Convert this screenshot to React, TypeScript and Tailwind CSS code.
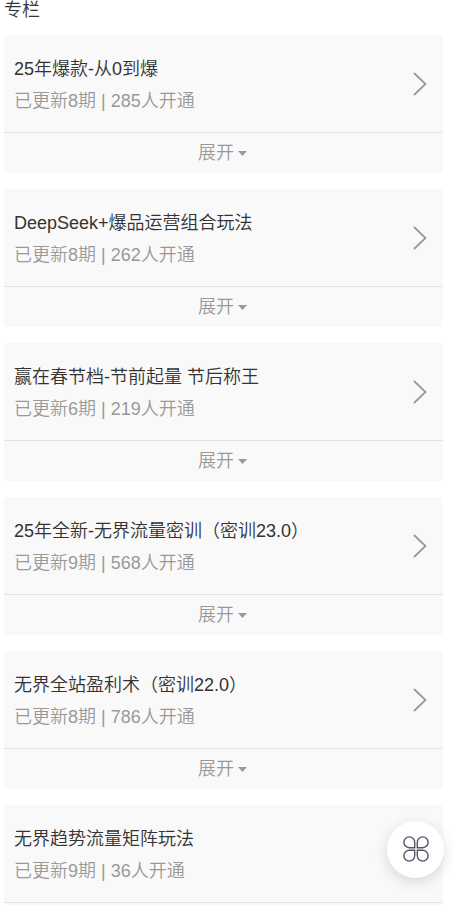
import { useState } from 'react';

type Column = {
    title: string;
    issues: number;
    members: number;
};

const columns: Column[] = [
    { title: '25年爆款-从0到爆', issues: 8, members: 285 },
    { title: 'DeepSeek+爆品运营组合玩法', issues: 8, members: 262 },
    { title: '赢在春节档-节前起量 节后称王', issues: 6, members: 219 },
    { title: '25年全新-无界流量密训（密训23.0）', issues: 9, members: 568 },
    { title: '无界全站盈利术（密训22.0）', issues: 8, members: 786 },
    { title: '无界趋势流量矩阵玩法', issues: 9, members: 36 },
];

function ColumnCard({ title, issues, members }: Column) {
    const [open, setOpen] = useState(false);

    return (
        <li className="rounded-sm bg-[#f9f9f9]">
            <a href="#" className="flex items-center justify-between pr-4 pl-2.5">
                <div className="min-w-0 pt-[18px] pb-[15px] leading-8">
                    <h2 className="text-[#333]">{title}</h2>
                    <p className="text-[#999]">
                        已更新{issues}期 | {members}人开通
                    </p>
                </div>
                <svg className="h-6 w-3.5 shrink-0" viewBox="0 0 14 24" fill="none" stroke="#999" strokeWidth="1.8" aria-hidden="true">
                    <path d="M1 1l11.5 11L1 23" />
                </svg>
            </a>
            {/* 展开按钮 */}
            <button
                type="button"
                aria-expanded={open}
                onClick={() => setOpen(!open)}
                className="flex w-full items-center justify-center gap-1 border-t border-[#e3e3e3] pr-0.5 leading-10 text-[#999]"
            >
                展开
                <svg className="h-[5px] w-[9px]" viewBox="0 0 9 5" fill="#999" aria-hidden="true">
                    <path d="M0 0h9L4.5 5z" />
                </svg>
            </button>
        </li>
    );
}

export default function App() {
    return (
        <div className="min-h-screen bg-white pr-2.5 pl-1 font-['Liberation_Sans','Noto_Sans_CJK_SC',sans-serif] text-[18px] font-[350]">
            <h1 className="mb-[15px] leading-5 font-[350] text-[#333]">专栏</h1>

            <ul className="flex flex-col gap-4">
                {columns.map((column) => (
                    <ColumnCard key={column.title} {...column} />
                ))}
            </ul>

            {/* 悬浮菜单 */}
            <button
                type="button"
                aria-label="菜单"
                className="fixed right-[9px] bottom-[27px] flex size-[57px] items-center justify-center rounded-full bg-white pb-0.5 shadow-[0_4px_14px_rgba(0,0,0,0.14)]"
            >
                <svg className="size-[26px]" viewBox="0 0 26 26" fill="none" stroke="#55536a" strokeWidth="1.4" aria-hidden="true">
                    <path d="M11.7 11.7H6.3a5.4 5.4 0 1 1 5.4-5.4z" />
                    <path d="M14.3 11.7h5.4a5.4 5.4 0 1 0-5.4-5.4z" />
                    <path d="M11.7 14.3H6.3a5.4 5.4 0 1 0 5.4 5.4z" />
                    <path d="M14.3 14.3h5.4a5.4 5.4 0 1 1-5.4 5.4z" />
                </svg>
            </button>
        </div>
    );
}
